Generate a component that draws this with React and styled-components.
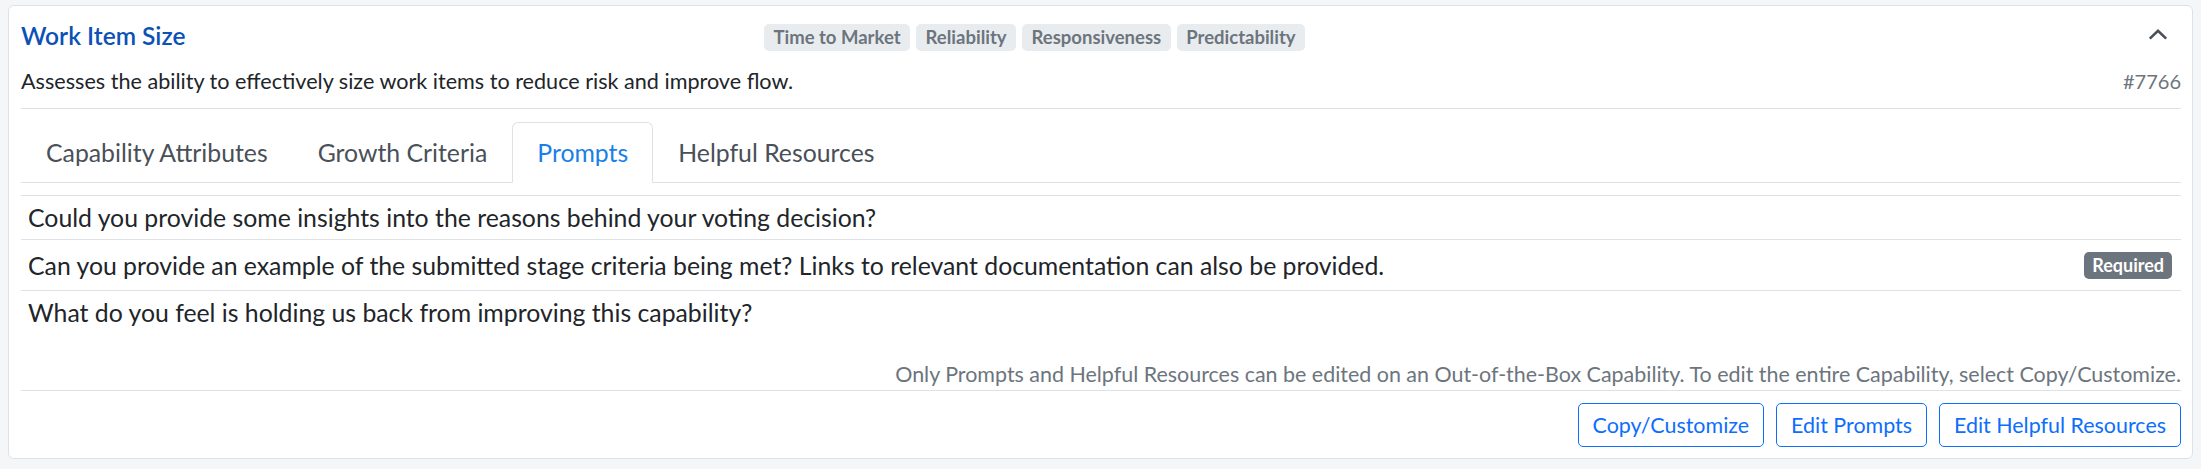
import React, { useState } from 'react';
import styled, { createGlobalStyle } from 'styled-components';

const GlobalStyle = createGlobalStyle`
  * { box-sizing: border-box; }
  body {
    margin: 0;
    padding: 5px 0 0 8px;
    background: #f5f6f8;
    font-family: Lato, "Liberation Sans", sans-serif;
    color: #212529;
  }
`;

const Card = styled.section`
  width: 2185px;
  background: #fff;
  border: 1px solid #dee2e6;
  border-radius: 6px;
  padding: 18px 11px 11px 12px;
`;

const Summary = styled.div`
  border-bottom: 1px solid #dee2e6;
  padding-bottom: 13px;
`;

const Header = styled.div`
  display: flex;
  align-items: center;
  height: 27px;
`;

const Title = styled.h2`
  flex: 1;
  margin: 0 0 4px;
  font-size: 24.5px;
  font-weight: 600;
  line-height: 30px;
  color: #0b51b6;
`;

const Tags = styled.div`
  display: flex;
  gap: 6px;
  margin-right: 120px;
`;

const Tag = styled.span`
  height: 27px;
  padding: 0 9.5px;
  border-radius: 5px;
  background: #e9ecef;
  color: #6c757d;
  font-size: 18.5px;
  font-weight: 700;
  line-height: 27px;
  white-space: nowrap;
`;

const HeaderEnd = styled.div`
  flex: 1;
  display: flex;
  justify-content: flex-end;
  align-self: flex-start;
  padding: 5px 13px 0 0;
`;

const CollapseButton = styled.button`
  display: flex;
  padding: 0;
  border: 0;
  background: none;
  cursor: pointer;
`;

const DescriptionRow = styled.div`
  display: flex;
  justify-content: space-between;
  align-items: baseline;
  margin-top: 16px;
`;

const Description = styled.p`
  margin: 0;
  font-size: 21.6px;
  line-height: 28px;
  color: #212529;
`;

const ItemNumber = styled.span`
  font-size: 20px;
  line-height: 28px;
  color: #6c757d;
`;

const TabList = styled.nav`
  display: flex;
  margin-top: 13px;
  border-bottom: 1px solid #dee2e6;
`;

const Tab = styled.button`
  margin-bottom: -1px;
  padding: 14.5px 24px;
  border: 1px solid ${p => (p.$active ? '#dee2e6' : 'transparent')};
  border-bottom-color: ${p => (p.$active ? '#fff' : 'transparent')};
  border-radius: 6px 6px 0 0;
  background: ${p => (p.$active ? '#fff' : 'transparent')};
  font-family: inherit;
  font-size: 24.8px;
  line-height: 30px;
  color: ${p => (p.$active ? '#1a7fe6' : '#495057')};
  cursor: pointer;
`;

const TabPanel = styled.div`
  padding-top: 12px;
`;

const PromptList = styled.ul`
  min-height: 166px;
  margin: 0;
  padding: 0;
  list-style: none;
`;

const PromptRow = styled.li`
  display: flex;
  align-items: center;
  justify-content: space-between;
  border-top: 1px solid #dee2e6;
  padding: 7px 9px 7px 7px;
  font-size: 24.8px;
  line-height: 29px;
  color: #212529;
`;

const RequiredBadge = styled.span`
  height: 27px;
  margin: 4.5px 0;
  padding: 0 8px;
  border-radius: 5px;
  background: #6c757d;
  color: #fff;
  font-size: 18px;
  font-weight: 700;
  line-height: 27px;
`;

const Note = styled.p`
  margin: 0;
  padding-bottom: 3px;
  border-bottom: 1px solid #dee2e6;
  text-align: right;
  font-size: 21.44px;
  line-height: 26px;
  color: #6c757d;
`;

const Actions = styled.div`
  display: flex;
  justify-content: flex-end;
  gap: 12px;
  margin-top: 12px;
`;

const OutlineButton = styled.button`
  padding: 8px 14px;
  border: 1px solid #0d6efd;
  border-radius: 5px;
  background: #fff;
  font-family: inherit;
  font-size: 21.45px;
  line-height: 26px;
  color: #0d6efd;
  cursor: pointer;
`;

const ChevronUp = () => (
  <svg width="20" height="11" viewBox="0 0 20 11" fill="none">
    <polyline points="1.8,9.6 10,1.8 18.2,9.6" stroke="#4a5058" strokeWidth="2.6" />
  </svg>
);

const tabs = ['Capability Attributes', 'Growth Criteria', 'Prompts', 'Helpful Resources'];

const prompts = [
  { text: 'Could you provide some insights into the reasons behind your voting decision?' },
  {
    text: 'Can you provide an example of the submitted stage criteria being met? Links to relevant documentation can also be provided.',
    required: true,
  },
  { text: 'What do you feel is holding us back from improving this capability?' },
];

export default function App() {
  const [activeTab, setActiveTab] = useState('Prompts');

  return (
    <>
      <GlobalStyle />
      <Card>
        <Summary>
          <Header>
            <Title>Work Item Size</Title>
            <Tags>
              <Tag>Time to Market</Tag>
              <Tag>Reliability</Tag>
              <Tag>Responsiveness</Tag>
              <Tag>Predictability</Tag>
            </Tags>
            <HeaderEnd>
              <CollapseButton aria-label="Collapse">
                <ChevronUp />
              </CollapseButton>
            </HeaderEnd>
          </Header>
          <DescriptionRow>
            <Description>Assesses the ability to effectively size work items to reduce risk and improve flow.</Description>
            <ItemNumber>#7766</ItemNumber>
          </DescriptionRow>
        </Summary>

        <TabList>
          {tabs.map(t => (
            <Tab key={t} $active={t === activeTab} onClick={() => setActiveTab(t)}>
              {t}
            </Tab>
          ))}
        </TabList>

        <TabPanel>
          <PromptList>
            {prompts.map(p => (
              <PromptRow key={p.text}>
                <span>{p.text}</span>
                {p.required && <RequiredBadge>Required</RequiredBadge>}
              </PromptRow>
            ))}
          </PromptList>
          <Note>
            Only Prompts and Helpful Resources can be edited on an Out-of-the-Box Capability. To edit the entire
            Capability, select Copy/Customize.
          </Note>
          <Actions>
            <OutlineButton>Copy/Customize</OutlineButton>
            <OutlineButton>Edit Prompts</OutlineButton>
            <OutlineButton>Edit Helpful Resources</OutlineButton>
          </Actions>
        </TabPanel>
      </Card>
    </>
  );
}
